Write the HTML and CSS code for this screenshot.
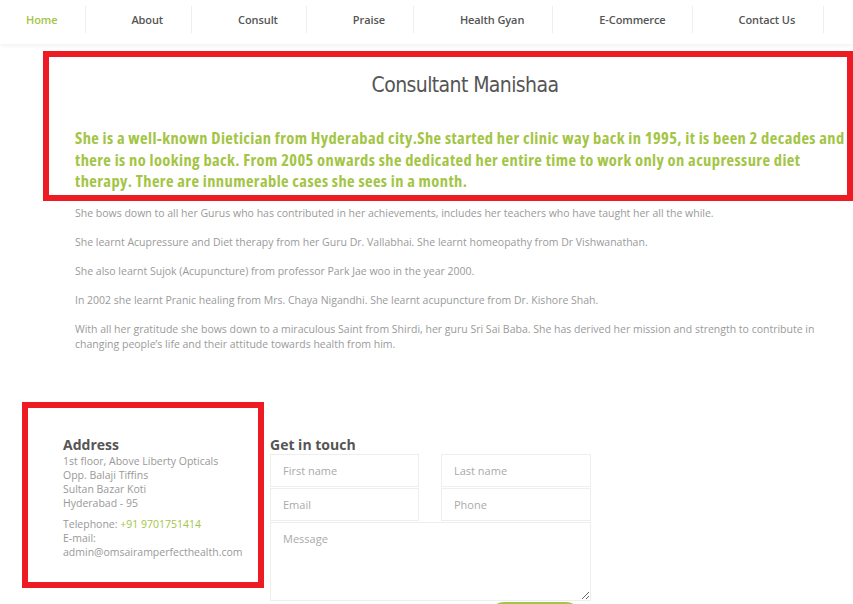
FILE: index.html
```html
<!DOCTYPE html>
<html lang="en">
<head>
<meta charset="utf-8">
<title>Consultant Manishaa</title>
<link rel="stylesheet" href="styles.css">
</head>
<body>
<nav class="topnav">
  <ul class="menu">
    <li class="menu-item active">Home</li>
    <li class="menu-item">About</li>
    <li class="menu-item">Consult</li>
    <li class="menu-item">Praise</li>
    <li class="menu-item">Health Gyan</li>
    <li class="menu-item">E-Commerce</li>
    <li class="menu-item">Contact Us</li>
  </ul>
</nav>

<main class="about">
  <section class="intro">
    <h1 class="intro-title">Consultant Manishaa</h1>
    <p class="intro-lead">She is a well-known Dietician from Hyderabad city.She started her clinic way back in 1995, it is been 2 decades and there is no looking back. From 2005 onwards she dedicated her entire time to work only on acupressure diet therapy. There are innumerable cases she sees in a month.</p>
  </section>
  <div class="story">
    <p>She bows down to all her Gurus who has contributed in her achievements, includes her teachers who have taught her all the while.</p>
    <p>She learnt Acupressure and Diet therapy from her Guru Dr. Vallabhai. She learnt homeopathy from Dr Vishwanathan.</p>
    <p>She also learnt Sujok (Acupuncture) from professor Park Jae woo in the year 2000.</p>
    <p>In 2002 she learnt Pranic healing from Mrs. Chaya Nigandhi. She learnt acupuncture from Dr. Kishore Shah.</p>
    <p>With all her gratitude she bows down to a miraculous Saint from Shirdi, her guru Sri Sai Baba. She has derived her mission and strength to contribute in changing people’s life and their attitude towards health from him.</p>
  </div>
</main>

<section class="contact">
  <div class="address">
    <h2 class="address-title">Address</h2>
    <p class="address-lines">1st floor, Above Liberty Opticals<br>Opp. Balaji Tiffins<br>Sultan Bazar Koti<br>Hyderabad - 95</p>
    <p class="address-lines">Telephone: <span class="phone">+91 9701751414</span><br>E-mail:<br>admin@omsairamperfecthealth.com</p>
  </div>
  <form class="touch">
    <h2 class="touch-title">Get in touch</h2>
    <div class="fields">
      <input class="field" type="text" placeholder="First name">
      <input class="field" type="text" placeholder="Last name">
      <input class="field" type="text" placeholder="Email">
      <input class="field" type="text" placeholder="Phone">
      <textarea class="field message" placeholder="Message"></textarea>
      <button class="send" type="button"></button>
    </div>
  </form>
</section>
</body>
</html>
```

FILE: styles.css
```css
html, body {
  margin: 0;
  padding: 0;
  background: #fff;
  overflow: hidden;
}
body {
  font-family: "Open Sans", "Noto Sans", sans-serif;
  color: #999;
  width: 853px;
  height: 604px;
}

.topnav {
  height: 44px;
  box-shadow: 0 2px 4px rgba(0, 0, 0, 0.05);
  position: relative;
  z-index: 1;
}
.menu {
  list-style: none;
  margin: 0;
  padding: 6px 0 0 0;
  display: flex;
}
.menu-item {
  height: 27px;
  line-height: 27px;
  font-size: 11px;
  font-weight: 600;
  letter-spacing: -0.1px;
  color: #555;
  padding: 0 28px 0 46px;
  border-right: 1px solid #eee;
  white-space: nowrap;
}
.menu-item:first-child {
  padding-left: 26px;
}
.menu-item:nth-child(2) {
  padding-left: 45px;
}
.menu-item:nth-child(6) {
  padding-right: 26px;
}
.menu-item.active {
  color: #a3c545;
}

.about {
  margin: 7px 0 0 43px;
}
.intro {
  border: 6px solid #ed1c24;
  padding: 13px 0 3px 26px;
}
.intro-title {
  margin: 0;
  padding-left: 8px;
  text-align: center;
  font-family: "DejaVu Sans Condensed", "DejaVu Sans", sans-serif;
  font-weight: normal;
  font-size: 21px;
  line-height: 30px;
  color: #555;
  letter-spacing: -0.6px;
}
.intro-lead {
  margin: 27px 0 0 0;
  font-size: 16.5px;
  line-height: 21.5px;
  font-weight: 700;
  font-stretch: 75%;
  letter-spacing: 0.4px;
  color: #a3c545;
}
.story {
  padding: 5px 0 0 32px;
  width: 760px;
}
.story p {
  margin: 0 0 14px 0;
  font-size: 10.5px;
  line-height: 15px;
  color: #9a9a9a;
}

.contact {
  display: flex;
  margin: 50px 0 0 22px;
  gap: 6px;
}
.address {
  width: 195px;
  height: 146px;
  border: 6px solid #ed1c24;
  padding: 28px 0 0 35px;
}
.address-title,
.touch-title {
  margin: 0;
  font-size: 14px;
  line-height: 18px;
  font-weight: 700;
  color: #555;
}
.address-lines {
  margin: 0 0 7px 0;
  font-size: 10.5px;
  line-height: 14px;
  color: #999;
}
.phone {
  color: #a3c545;
}
.touch {
  padding-top: 34px;
}
.touch-title {
  margin-bottom: 0;
}
.fields {
  display: grid;
  grid-template-columns: 149px 150px;
  column-gap: 22px;
  row-gap: 1px;
}
.field {
  box-sizing: border-box;
  height: 33px;
  border: 1px solid #eee;
  padding: 0 12px;
  font-family: "Open Sans", sans-serif;
  font-size: 11px;
  color: #555;
  outline: none;
  margin: 0;
}
.field::placeholder {
  color: #aaa;
}
.message {
  grid-column: 1 / 3;
  height: 79px;
  padding-top: 8px;
  resize: both;
}
.send {
  grid-column: 2 / 3;
  justify-self: end;
  width: 92px;
  height: 30px;
  margin-right: 10px;
  border: none;
  border-radius: 15px;
  background: #a3c545;
}
```
